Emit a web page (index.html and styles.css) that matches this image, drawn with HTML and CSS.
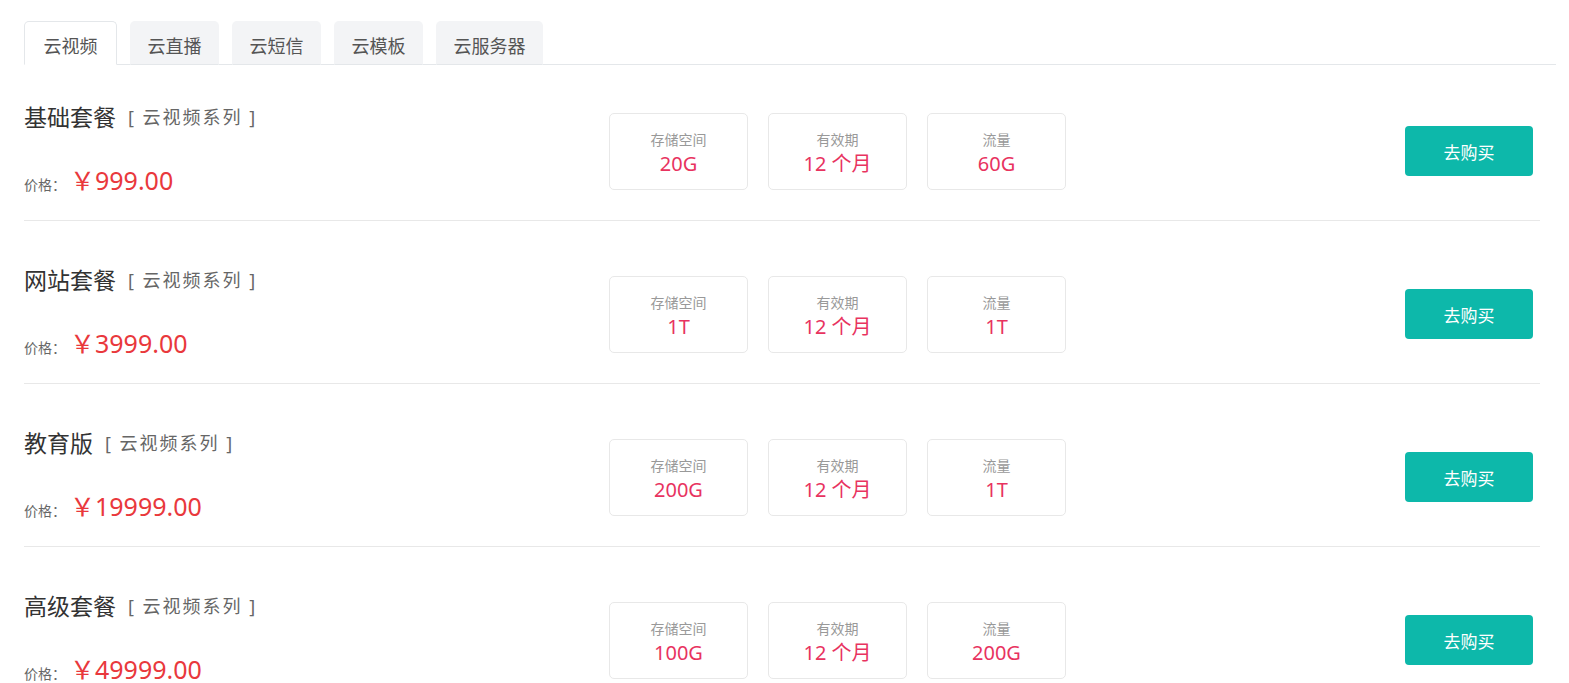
FILE: index.html
```html
<!DOCTYPE html>
<html lang="zh-CN">
<head>
<meta charset="utf-8">
<title>云视频套餐</title>
<link rel="stylesheet" href="styles.css">
</head>
<body>
<div class="page">
  <div class="tabs">
    <div class="tab active">云视频</div>
    <div class="tab">云直播</div>
    <div class="tab">云短信</div>
    <div class="tab">云模板</div>
    <div class="tab">云服务器</div>
  </div>
  <div class="list">
    <div class="row">
      <div class="info">
        <div class="title">基础套餐<span class="series">[ 云视频系列 ]</span></div>
        <div class="price-line"><span class="price-label">价格：</span><span class="price">￥999.00</span></div>
      </div>
      <div class="specs">
        <div class="spec"><div class="spec-label">存储空间</div><div class="spec-value">20G</div></div>
        <div class="spec"><div class="spec-label">有效期</div><div class="spec-value">12 个月</div></div>
        <div class="spec"><div class="spec-label">流量</div><div class="spec-value">60G</div></div>
      </div>
      <button class="buy">去购买</button>
    </div>
    <div class="row">
      <div class="info">
        <div class="title">网站套餐<span class="series">[ 云视频系列 ]</span></div>
        <div class="price-line"><span class="price-label">价格：</span><span class="price">￥3999.00</span></div>
      </div>
      <div class="specs">
        <div class="spec"><div class="spec-label">存储空间</div><div class="spec-value">1T</div></div>
        <div class="spec"><div class="spec-label">有效期</div><div class="spec-value">12 个月</div></div>
        <div class="spec"><div class="spec-label">流量</div><div class="spec-value">1T</div></div>
      </div>
      <button class="buy">去购买</button>
    </div>
    <div class="row">
      <div class="info">
        <div class="title">教育版<span class="series">[ 云视频系列 ]</span></div>
        <div class="price-line"><span class="price-label">价格：</span><span class="price">￥19999.00</span></div>
      </div>
      <div class="specs">
        <div class="spec"><div class="spec-label">存储空间</div><div class="spec-value">200G</div></div>
        <div class="spec"><div class="spec-label">有效期</div><div class="spec-value">12 个月</div></div>
        <div class="spec"><div class="spec-label">流量</div><div class="spec-value">1T</div></div>
      </div>
      <button class="buy">去购买</button>
    </div>
    <div class="row">
      <div class="info">
        <div class="title">高级套餐<span class="series">[ 云视频系列 ]</span></div>
        <div class="price-line"><span class="price-label">价格：</span><span class="price">￥49999.00</span></div>
      </div>
      <div class="specs">
        <div class="spec"><div class="spec-label">存储空间</div><div class="spec-value">100G</div></div>
        <div class="spec"><div class="spec-label">有效期</div><div class="spec-value">12 个月</div></div>
        <div class="spec"><div class="spec-label">流量</div><div class="spec-value">200G</div></div>
      </div>
      <button class="buy">去购买</button>
    </div>
  </div>
</div>
</body>
</html>
```

FILE: styles.css
```css
html, body {
  margin: 0;
  padding: 0;
  background: #fff;
}

body {
  font-family: "Noto Sans", "Noto Sans CJK SC", sans-serif;
  color: #333;
}

.page {
  padding: 21px 13px 0 24px;
}

.tabs {
  display: flex;
  align-items: flex-end;
  gap: 13px;
  border-bottom: 1px solid #e4e7ea;
  height: 43px;
}

.tab {
  box-sizing: border-box;
  height: 44px;
  margin-bottom: -1px;
  padding: 6px 16.5px 0;
  line-height: 36px;
  font-size: 18px;
  color: #555;
  background: #f3f4f6;
  border: 1px solid transparent;
  border-bottom: 1px solid #e4e7ea;
  border-radius: 5px 5px 0 0;
  white-space: nowrap;
}

.tab.active {
  background: #fff;
  border-color: #e4e7ea;
  border-bottom-color: #fff;
  padding: 6px 18.5px 0;
}

.list {
  margin-right: 16px;
}

.row {
  display: flex;
  align-items: center;
  padding: 44px 7px 20px 0;
  border-bottom: 1px solid #e8e8e8;
}

.row:first-child {
  padding-top: 37px;
}

.info {
  width: 585px;
  flex: none;
  padding-bottom: 5px;
}

.title {
  display: flex;
  align-items: center;
  height: 30px;
  font-size: 23px;
  line-height: 30px;
  color: #333;
  white-space: nowrap;
}

.series {
  font-size: 18px;
  letter-spacing: 2px;
  line-height: 30px;
  color: #666;
  margin-left: 12px;
}

.price-line {
  display: flex;
  align-items: baseline;
  height: 30px;
  line-height: 30px;
  margin-top: 33px;
}

.price-label {
  font-size: 14px;
  color: #666;
}

.price {
  font-size: 25px;
  color: #e9383c;
  margin-left: 4px;
}

.specs {
  display: flex;
  gap: 20px;
}

.spec {
  box-sizing: border-box;
  width: 139px;
  height: 77px;
  padding-top: 16px;
  border: 1px solid #e8e8e8;
  border-radius: 5px;
  text-align: center;
}

.spec-label {
  font-size: 14px;
  line-height: 20px;
  color: #999;
}

.spec-value {
  font-size: 20px;
  line-height: 28px;
  color: #e8335f;
}

.buy {
  margin-left: auto;
  width: 128px;
  height: 50px;
  border: none;
  border-radius: 4px;
  background: #0db8aa;
  color: #fff;
  font-family: "Noto Sans", "Noto Sans CJK SC", sans-serif;
  font-size: 17px;
  cursor: pointer;
  padding: 0;
}
```
